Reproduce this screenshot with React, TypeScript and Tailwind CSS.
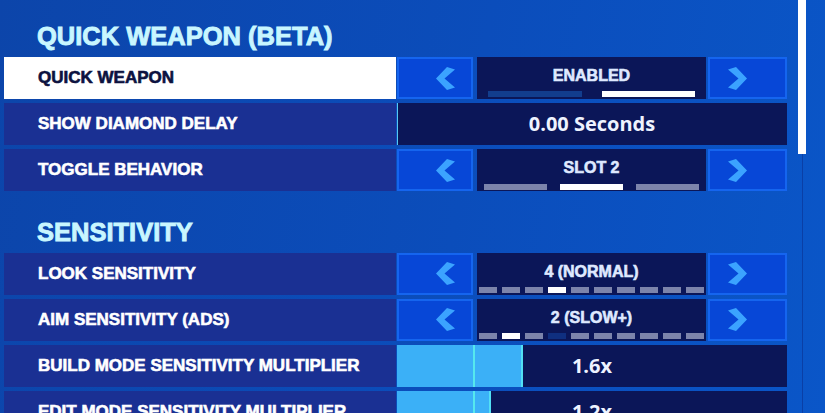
import React from "react";

const LABEL_FONT = { fontFamily: '"Liberation Sans", Arial, sans-serif' };
const VALUE_FONT = { fontFamily: '"Open Sans", "Noto Sans", sans-serif' };

function LeftArrow() {
  return (
    <svg width="19" height="23" viewBox="0 0 19 23">
      <polygon points="11,0 19,2.5 8.5,11.5 19,20.5 11,23 0,11.5" fill="#3ba3ff" />
    </svg>
  );
}

function RightArrow() {
  return (
    <svg width="19" height="23" viewBox="0 0 19 23">
      <polygon points="8,0 0,2.5 10.5,11.5 0,20.5 8,23 19,11.5" fill="#3ba3ff" />
    </svg>
  );
}

function SectionTitle({ children, className }: { children: React.ReactNode; className?: string }) {
  return (
    <div
      className={
        "pl-[33px] text-[25.5px] leading-none font-bold text-[#c8f6ff] [-webkit-text-stroke:0.9px_#c8f6ff] " +
        (className ?? "")
      }
      style={LABEL_FONT}
    >
      {children}
    </div>
  );
}

function Label({ text, active }: { text: string; active?: boolean }) {
  return (
    <div
      className={
        "w-[392px] h-full flex items-center pl-[34px] text-[17px] font-bold " +
        (active
          ? "bg-white text-[#0c1240] [-webkit-text-stroke:0.6px_#0c1240]"
          : "bg-[#1a3093] text-white [-webkit-text-stroke:0.6px_#ffffff]")
      }
      style={LABEL_FONT}
    >
      {text}
    </div>
  );
}

function Selector({
  value,
  bars,
}: {
  value: string;
  bars: React.ReactNode;
}) {
  return (
    <div className="ml-[1px] w-[390px] h-full flex">
      <div className="w-[76px] h-full border-2 border-[#1565ef] bg-[#0747d7] flex items-center justify-end pr-[16px]">
        <LeftArrow />
      </div>
      <div className="ml-[4px] w-[229px] h-full bg-[#0b1658] flex flex-col justify-between pt-[11px] pb-[2px]">
        <div
          className="text-center text-[16px] leading-none font-bold text-[#dfe9ff] [-webkit-text-stroke:0.6px_#dfe9ff]"
          style={LABEL_FONT}
        >
          {value}
        </div>
        {bars}
      </div>
      <div className="ml-[2px] w-[79px] h-full border-2 border-[#1565ef] bg-[#0747d7] flex items-center justify-start pl-[18px]">
        <RightArrow />
      </div>
    </div>
  );
}

function Segments({ active, dark }: { active: number; dark?: number }) {
  const items = Array.from({ length: 10 }, (_, i) => i);
  return (
    <div className="flex gap-[4.5px] px-[2px] h-[6px]">
      {items.map((i) => (
        <div
          key={i}
          className={
            "flex-1 h-full " +
            (i === active ? "bg-white" : i === dark ? "bg-[#0f2f80]" : "bg-[#7c84ab]")
          }
        />
      ))}
    </div>
  );
}

function Slider({ fill, value, zero }: { fill: number; value: string; zero?: boolean }) {
  return (
    <div className="ml-[1px] w-[390px] h-full bg-[#0b1658] flex relative">
      {zero ? (
        <div className="w-[1px] h-full bg-[#58c8f0]" />
      ) : (
        <div
          className="h-full bg-[#3bb0f7] border-r-2 border-[#52e0f5] relative"
          style={{ width: fill }}
        >
          <div className="absolute left-[76px] top-0 w-[2px] h-full bg-[#55e8ee]" />
        </div>
      )}
      <div
        className="absolute inset-0 flex items-center justify-center text-[20px] font-bold text-[#eef3ff]"
        style={VALUE_FONT}
      >
        {value}
      </div>
    </div>
  );
}

function Row({ children }: { children: React.ReactNode }) {
  return <div className="h-[42px] flex shrink-0">{children}</div>;
}

export default function App() {
  return (
    <div className="w-[825px] h-[413px] overflow-hidden flex bg-[linear-gradient(100deg,#0c45aa_0%,#0b4dbb_55%,#0a56c8_100%)]">
      <div className="w-[787px] pl-[4px] pt-[24px] flex flex-col shrink-0">
        <SectionTitle>QUICK WEAPON (BETA)</SectionTitle>
        <div className="mt-[7.5px] flex flex-col gap-[4px]">
          <Row>
            <Label text="QUICK WEAPON" active />
            <Selector
              value="ENABLED"
              bars={
                <div className="flex gap-[20px] px-[11px] h-[6px]">
                  <div className="flex-1 bg-[#123d8d]" />
                  <div className="flex-1 bg-white" />
                </div>
              }
            />
          </Row>
          <Row>
            <Label text="SHOW DIAMOND DELAY" />
            <Slider fill={0} value="0.00 Seconds" zero />
          </Row>
          <Row>
            <Label text="TOGGLE BEHAVIOR" />
            <Selector
              value="SLOT 2"
              bars={
                <div className="flex gap-[13px] px-[7px] h-[6px] mb-[-1px]">
                  <div className="flex-1 bg-[#7c84ab]" />
                  <div className="flex-1 bg-white" />
                  <div className="flex-1 bg-[#7c84ab]" />
                </div>
              }
            />
          </Row>
        </div>
        <SectionTitle className="mt-[28.5px]">SENSITIVITY</SectionTitle>
        <div className="mt-[7.5px] flex flex-col gap-[4px]">
          <Row>
            <Label text="LOOK SENSITIVITY" />
            <Selector value="4 (NORMAL)" bars={<Segments active={3} />} />
          </Row>
          <Row>
            <Label text="AIM SENSITIVITY (ADS)" />
            <Selector value="2 (SLOW+)" bars={<Segments active={1} dark={3} />} />
          </Row>
          <Row>
            <Label text="BUILD MODE SENSITIVITY MULTIPLIER" />
            <Slider fill={126} value="1.6x" />
          </Row>
          <Row>
            <Label text="EDIT MODE SENSITIVITY MULTIPLIER" />
            <Slider fill={94} value="1.2x" />
          </Row>
        </div>
      </div>
      <div className="ml-[11px] w-[8px] h-full relative shrink-0">
        <div className="absolute left-[3.5px] top-0 w-[1px] h-full bg-[#0a3fa6]" />
        <div className="absolute left-0 top-0 w-[8px] h-[154px] bg-white" />
      </div>
    </div>
  );
}
